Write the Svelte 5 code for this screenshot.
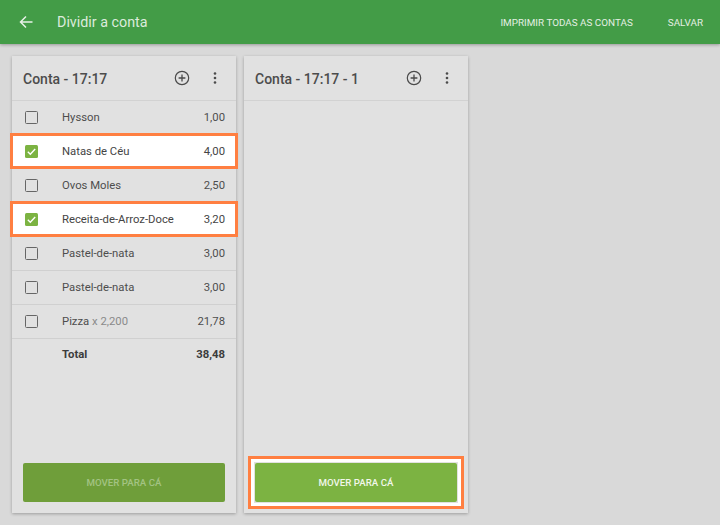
<script>
  const items = [
    { name: "Hysson", price: "1,00" },
    { name: "Natas de Céu", price: "4,00", selected: true },
    { name: "Ovos Moles", price: "2,50" },
    { name: "Receita-de-Arroz-Doce", price: "3,20", selected: true },
    { name: "Pastel-de-nata", price: "3,00" },
    { name: "Pastel-de-nata", price: "3,00" },
    { name: "Pizza", qty: "x 2,200", price: "21,78" }
  ];
</script>

{#snippet cardHead(title)}
  <div class="card-head">
    <span class="card-title">{title}</span>
    <svg class="plus" viewBox="0 0 16 16" width="16" height="16">
      <circle cx="8" cy="8" r="6.7" fill="none" stroke="#4a4a4a" stroke-width="1.2" />
      <path d="M8 4.6v6.8M4.6 8h6.8" stroke="#4a4a4a" stroke-width="1.3" fill="none" />
    </svg>
    <svg class="more" viewBox="0 0 4 14" width="4" height="14">
      <circle cx="2" cy="2.5" r="1.3" fill="#4a4a4a" />
      <circle cx="2" cy="7" r="1.3" fill="#4a4a4a" />
      <circle cx="2" cy="11.5" r="1.3" fill="#4a4a4a" />
    </svg>
  </div>
{/snippet}

<div class="page">
  <header class="topbar">
    <svg class="back" viewBox="0 0 14 14" width="14" height="14">
      <path d="M13.5 7H1.5M7 1.5L1.5 7L7 12.5" fill="none" stroke="#e8f1e8" stroke-width="1.5" />
    </svg>
    <h1>Dividir a conta</h1>
    <button class="action print">IMPRIMIR TODAS AS CONTAS</button>
    <button class="action">SALVAR</button>
  </header>

  <main class="columns">
    <section class="card">
      {@render cardHead("Conta - 17:17")}
      <ul class="rows">
        {#each items as item}
          <li class="row" class:selected={item.selected}>
            {#if item.selected}
              <svg class="box" viewBox="0 0 13 13" width="13" height="13">
                <rect width="13" height="13" rx="1.5" fill="#7cb342" />
                <path d="M2.8 6.8L5.3 9.2L10.2 3.9" fill="none" stroke="#fff" stroke-width="1.4" />
              </svg>
            {:else}
              <span class="box empty"></span>
            {/if}
            <span class="name">{item.name}{#if item.qty}{" "}<span class="qty">{item.qty}</span>{/if}</span>
            <span class="price">{item.price}</span>
          </li>
        {/each}
        <li class="row total">
          <span class="box-space"></span>
          <span class="name">Total</span>
          <span class="price">38,48</span>
        </li>
      </ul>
      <div class="foot">
        <button class="move" disabled>MOVER PARA CÁ</button>
      </div>
    </section>

    <section class="card">
      {@render cardHead("Conta - 17:17 - 1")}
      <div class="rows"></div>
      <div class="foot marked">
        <button class="move">MOVER PARA CÁ</button>
      </div>
    </section>
  </main>
</div>

<style>
  :global(body) {
    margin: 0;
    background: #d9d9d9;
    font-family: Roboto, "Liberation Sans", sans-serif;
  }

  .page {
    width: 720px;
    height: 525px;
    overflow: hidden;
    display: flex;
    flex-direction: column;
  }

  .topbar {
    height: 44px;
    flex: none;
    display: flex;
    align-items: center;
    background: #439c47;
    box-shadow: 0 1px 3px rgba(0, 0, 0, 0.3);
    color: #e3efe3;
    position: relative;
  }

  .back {
    margin-left: 19px;
  }

  h1 {
    margin: 0 0 0 24px;
    flex: 1;
    font-size: 14.3px;
    font-weight: 400;
    color: #dcebdc;
  }

  .action {
    border: 0;
    padding: 0;
    background: none;
    font: 400 9.9px Roboto, sans-serif;
    color: #e3efe3;
    margin-right: 17px;
  }

  .print {
    margin-right: 35px;
  }

  .columns {
    flex: 1;
    display: flex;
    gap: 8px;
    padding: 12px;
  }

  .card {
    width: 224px;
    display: flex;
    flex-direction: column;
    background: #e1e1e1;
    box-shadow: 0 1px 3px rgba(0, 0, 0, 0.28);
  }

  .card-head {
    height: 44px;
    flex: none;
    display: flex;
    align-items: center;
    border-bottom: 1px solid #d2d2d2;
    padding: 0 19px 0 11px;
  }

  .card-title {
    flex: 1;
    padding-top: 2px;
    font-size: 14px;
    font-weight: 500;
    color: #4c4c4c;
  }

  .more {
    margin-left: 23.5px;
  }

  .rows {
    flex: 1;
    margin: 0;
    padding: 0;
    list-style: none;
  }

  .row {
    height: 33px;
    display: flex;
    align-items: center;
    border-bottom: 1px solid #d0d0d0;
    padding-right: 11px;
    font-size: 11.3px;
    color: #4d4d4d;
    position: relative;
  }

  .row.selected {
    background: #fff;
    color: #444;
  }

  .row.selected::after {
    content: "";
    position: absolute;
    inset: -2px -2px -1px;
    border: 3px solid #ff7f41;
    box-sizing: border-box;
  }

  .box,
  .box-space {
    width: 13px;
    height: 13px;
    margin: 0 24px 0 13px;
    flex: none;
    box-sizing: border-box;
  }

  .box.empty {
    border: 1.5px solid #666;
    border-radius: 1.5px;
  }

  .name {
    flex: 1;
  }

  .qty {
    color: #8a8a8a;
  }

  .total {
    height: 30px;
    border-bottom: 0;
    font-weight: 700;
    color: #3c3c3c;
  }

  .foot {
    padding: 0 11px 11px;
    position: relative;
  }

  .marked::after {
    content: "";
    position: absolute;
    inset: -7px 4px 4px;
    border: 3px solid #ff7f41;
    box-shadow: inset 0 0 0 3px #fff;
    pointer-events: none;
  }

  .move {
    display: block;
    width: 100%;
    height: 39px;
    border: 0;
    border-radius: 2px;
    background: #7cb342;
    font: 500 9.7px Roboto, sans-serif;
    color: #f1f7ea;
  }

  .move:disabled {
    background: #6f9e3a;
    color: #a3c383;
  }
</style>
